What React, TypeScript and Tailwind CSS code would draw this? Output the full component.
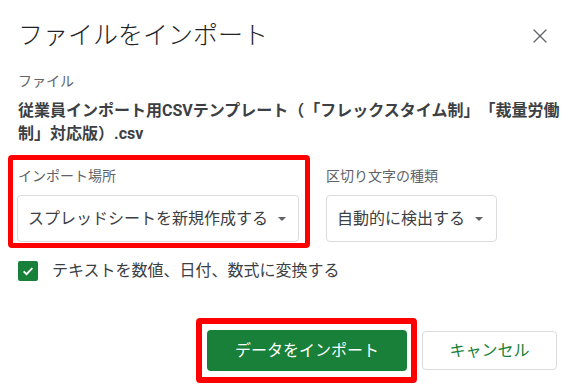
import { X } from "lucide-react";

const FONT = {
  fontFamily: 'Roboto, "Noto Sans CJK JP", "Noto Sans", sans-serif',
};

function Caret() {
  return (
    <svg width="8" height="4" viewBox="0 0 8 4" className="shrink-0">
      <polygon points="0,0 8,0 4,4" fill="#5f6368" />
    </svg>
  );
}

function Select({ value, width }: { value: string; width: string }) {
  return (
    <div
      className={`flex h-[47px] items-center gap-[10px] rounded-[4px] border border-[#dadce0] pl-[10px] text-[16px] text-[#3c4043] ${width}`}
    >
      <span className="whitespace-nowrap">{value}</span>
      <Caret />
    </div>
  );
}

export default function App() {
  return (
    <div
      className="relative h-[391px] w-[580px] overflow-hidden bg-white pl-[18px] pt-[20px]"
      style={FONT}
    >
      {/* header */}
      <div className="flex items-center justify-between pr-[28px]">
        <h1 className="text-[25px] font-light leading-[32px] text-[#202124]">
          ファイルをインポート
        </h1>
        <X size={24} strokeWidth={1.25} color="#5f6368" />
      </div>

      <p className="mt-[19px] text-[14px] leading-[20px] text-[#5f6368]">
        ファイル
      </p>
      <p className="mt-[8px] text-[16px] font-bold leading-[23px] text-[#3c4043] [text-spacing-trim:space-all]">
        従業員インポート用CSVテンプレート（「フレックスタイム制」「裁量労働
        <br />
        制」対応版）.csv
      </p>

      {/* fields */}
      <div className="mt-[21px] flex gap-[27px]">
        <div className="relative">
          <div className="pointer-events-none absolute -bottom-[6px] -left-[10px] -right-[11px] -top-[11px] rounded-[4px] border-[5px] border-[#ff0000]" />
          <p className="text-[14px] leading-[20px] text-[#5f6368]">
            インポート場所
          </p>
          <div className="mt-[9px] -ml-[1px]">
            <Select value="スプレッドシートを新規作成する" width="w-[282px]" />
          </div>
        </div>
        <div>
          <p className="text-[14px] leading-[20px] text-[#5f6368]">
            区切り文字の種類
          </p>
          <div className="mt-[9px]">
            <Select value="自動的に検出する" width="w-[171px]" />
          </div>
        </div>
      </div>

      {/* checkbox */}
      <div className="mt-[19px] flex items-center gap-[14px]">
        <span className="flex h-[20px] w-[20px] items-center justify-center rounded-[2px] bg-[#188038]">
          <svg width="14" height="14" viewBox="0 0 24 24">
            <path
              d="M4.5 12.5l5 5L19.5 7"
              fill="none"
              stroke="#fff"
              strokeWidth="3.2"
            />
          </svg>
        </span>
        <span className="text-[16px] leading-[20px] text-[#3c4043]">
          テキストを数値、日付、数式に変換する
        </span>
      </div>

      {/* buttons */}
      <div className="mt-[49px] flex justify-end gap-[15px] pr-[23px]">
        <div className="relative">
          <div className="pointer-events-none absolute -bottom-[12px] -left-[11px] -right-[10px] -top-[12px] rounded-[4px] border-[6px] border-[#ff0000]" />
          <button className="h-[41px] w-[200px] rounded-[4px] bg-[#188038] text-[16px] text-white">
            データをインポート
          </button>
        </div>
        <button className="mt-[1px] h-[39px] w-[135px] rounded-[4px] border border-[#dadce0] bg-white text-[16px] text-[#188038]">
          キャンセル
        </button>
      </div>
    </div>
  );
}
